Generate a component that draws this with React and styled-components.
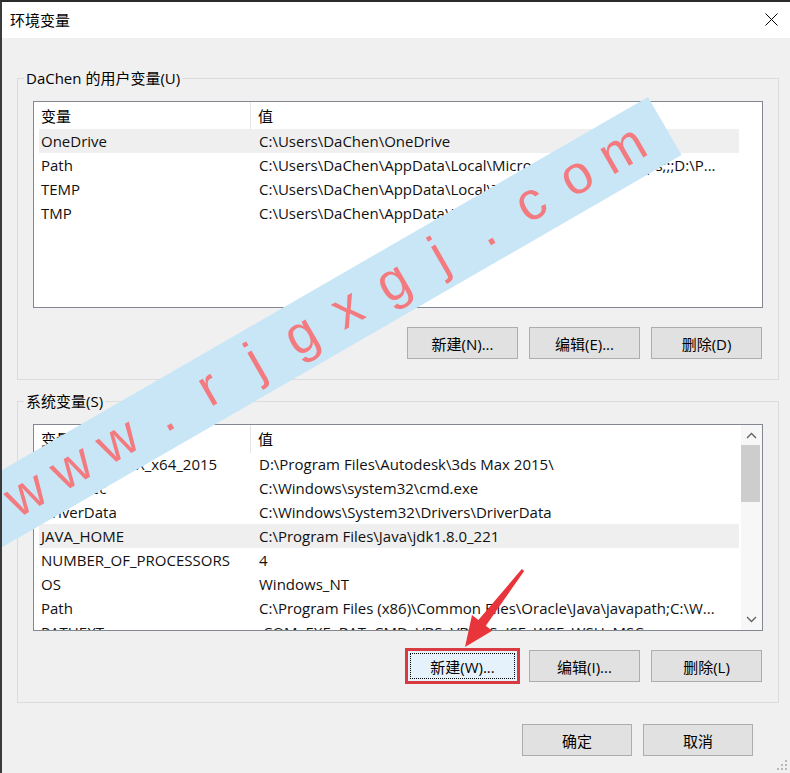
import React from "react";
import styled, { createGlobalStyle } from "styled-components";

const GlobalStyle = createGlobalStyle`
  html, body { margin: 0; padding: 0; background: #f0f0f0; }
  body {
    font-family: "Open Sans", "Noto Sans CJK SC", sans-serif;
    font-size: 15px;
    color: #000;
  }
  * { box-sizing: border-box; }
`;

const Window = styled.div`
  position: relative;
  width: 790px;
  height: 773px;
  background: #f0f0f0;
  border-top: 2px solid #2b2b2b;
  border-left: 2px solid #3a3a3a;
  display: flex;
  flex-direction: column;
  overflow: hidden;
`;

const TitleBar = styled.div`
  height: 36px;
  background: #fff;
  display: flex;
  align-items: center;
  justify-content: space-between;
  padding: 0 12px 2px 8px;
  font-size: 15px;
  flex-shrink: 0;
`;

const CloseIcon = styled.svg`
  width: 13px;
  height: 13px;
  display: block;
`;

const Body = styled.div`
  padding: 0 11px 0 15px;
  display: flex;
  flex-direction: column;
`;

const Group = styled.fieldset`
  margin: ${(p) => (p.$first ? "30px" : "11px")} 0 0 0;
  border: 1px solid #dcdcdc;
  padding: 0 15px 20px 15px;
  min-width: 0;
`;

const Legend = styled.legend`
  margin-left: -9px;
  padding: 0 2px;
  line-height: 20px;
  font-size: 15px;
`;

const List = styled.div`
  margin-top: 13px;
  height: 207px;
  border: 1px solid #828790;
  background: #fff;
  display: flex;
  overflow: hidden;
`;

const ListBody = styled.div`
  flex: 1;
  min-width: 0;
  display: flex;
  flex-direction: column;
`;

const Header = styled.div`
  display: grid;
  grid-template-columns: 217px 1fr;
  height: 27px;
  flex-shrink: 0;
`;

const HeaderCell = styled.div`
  line-height: 28px;
  padding-left: 7px;
  border-right: ${(p) => (p.$divider ? "1px solid #e5e5e5" : "none")};
  white-space: nowrap;
`;

const Row = styled.div`
  margin-left: 5px;
  width: 700px;
  height: 24px;
  flex-shrink: 0;
  display: grid;
  grid-template-columns: 218px 482px;
  background: ${(p) => (p.$selected ? "#efefef" : "transparent")};
`;

const Cell = styled.div`
  padding-left: 2px;
  line-height: 24px;
  white-space: nowrap;
  overflow: hidden;
  text-overflow: ellipsis;
  color: #111;
`;

const ScrollBar = styled.div`
  width: 21px;
  flex-shrink: 0;
  background: #f7f7f7;
  display: flex;
  flex-direction: column;
  align-items: stretch;
`;

const ScrollArrow = styled.div`
  height: ${(p) => p.$h}px;
  display: flex;
  align-items: center;
  justify-content: center;
  flex-shrink: 0;
`;

const Thumb = styled.div`
  height: 57px;
  margin: 0 2px 0 0;
  background: #cdcdcd;
  flex-shrink: 0;
`;

const Track = styled.div`
  flex: 1;
`;

const ButtonRow = styled.div`
  display: flex;
  justify-content: flex-end;
  gap: 11px;
  margin-top: 19px;
  padding-right: 1px;
`;

const Button = styled.button`
  width: ${(p) => p.$w || 111}px;
  height: 32px;
  padding: 2px;
  margin: 0;
  border: 1px solid ${(p) => (p.$focused ? "#0078d7" : "#adadad")};
  background: ${(p) => (p.$focused ? "#e5f1fb" : "#e1e1e1")};
  font-family: inherit;
  font-size: 15px;
  color: #000;
  display: flex;
  outline: ${(p) => (p.$marked ? "3px solid #d93a40" : "none")};
  outline-offset: -1px;
`;

const ButtonLabel = styled.span`
  flex: 1;
  display: flex;
  align-items: center;
  justify-content: center;
  border: 1px dotted ${(p) => (p.$focused ? "#000" : "transparent")};
`;

const Footer = styled.div`
  display: flex;
  justify-content: flex-end;
  gap: 11px;
  padding: 21px 26px 0 0;
`;

const Overlay = styled.svg`
  position: absolute;
  left: -2px;
  top: -2px;
  pointer-events: none;
`;

const Band = styled.div`
  position: absolute;
  left: -174px;
  top: 95px;
  width: 820px;
  height: 67px;
  background: #c9e6f6;
  transform-origin: 100% 0;
  transform: rotate(-30deg);
  display: flex;
  justify-content: flex-end;
  align-items: center;
  padding: 0 22px 6px 0;
  pointer-events: none;
`;

const Letter = styled.span`
  width: 53px;
  text-align: center;
  font-family: "Liberation Sans", Arial, sans-serif;
  font-size: 54px;
  line-height: 1;
  color: #f37b80;
`;

const Grip = styled.svg`
  position: absolute;
  right: 2px;
  bottom: 2px;
`;

const userVars = [
  ["OneDrive", "C:\\Users\\DaChen\\OneDrive", true],
  ["Path", "C:\\Users\\DaChen\\AppData\\Local\\Microsoft\\WindowsApps;;;D:\\P..."],
  ["TEMP", "C:\\Users\\DaChen\\AppData\\Local\\Temp"],
  ["TMP", "C:\\Users\\DaChen\\AppData\\Local\\Temp"],
];

const sysVars = [
  ["ADSK_3DSMAX_x64_2015", "D:\\Program Files\\Autodesk\\3ds Max 2015\\"],
  ["ComSpec", "C:\\Windows\\system32\\cmd.exe"],
  ["DriverData", "C:\\Windows\\System32\\Drivers\\DriverData"],
  ["JAVA_HOME", "C:\\Program Files\\Java\\jdk1.8.0_221", true],
  ["NUMBER_OF_PROCESSORS", "4"],
  ["OS", "Windows_NT"],
  ["Path", "C:\\Program Files (x86)\\Common Files\\Oracle\\Java\\javapath;C:\\W..."],
  ["PATHEXT", ".COM;.EXE;.BAT;.CMD;.VBS;.VBE;.JS;.JSE;.WSF;.WSH;.MSC"],
];

function VarList({ rows, scroll }) {
  return (
    <List>
      <ListBody>
        <Header>
          <HeaderCell $divider>变量</HeaderCell>
          <HeaderCell>值</HeaderCell>
        </Header>
        {rows.map(([k, v, sel], i) => (
          <Row key={i} $selected={sel}>
            <Cell>{k}</Cell>
            <Cell>{v}</Cell>
          </Row>
        ))}
      </ListBody>
      {scroll && (
        <ScrollBar>
          <ScrollArrow $h={20}>
            <svg width="11" height="7" viewBox="0 0 11 7">
              <path d="M1 6 L5.5 1.5 L10 6" fill="none" stroke="#606060" strokeWidth="1.3" />
            </svg>
          </ScrollArrow>
          <Thumb />
          <Track />
          <ScrollArrow $h={22}>
            <svg width="11" height="7" viewBox="0 0 11 7">
              <path d="M1 1 L5.5 5.5 L10 1" fill="none" stroke="#606060" strokeWidth="1.3" />
            </svg>
          </ScrollArrow>
        </ScrollBar>
      )}
    </List>
  );
}

function Btn({ children, focused, marked, w }) {
  return (
    <Button $focused={focused} $marked={marked} $w={w}>
      <ButtonLabel $focused={focused}>{children}</ButtonLabel>
    </Button>
  );
}

export default function App() {
  const letters = "www.rjgxgj.com".split("");
  return (
    <>
      <GlobalStyle />
      <Window>
        <TitleBar>
          <span>环境变量</span>
          <CloseIcon viewBox="0 0 13 13">
            <path d="M0.5 0.5 L12.5 12.5 M12.5 0.5 L0.5 12.5" stroke="#000" strokeWidth="1" />
          </CloseIcon>
        </TitleBar>
        <Body>
          <Group $first>
            <Legend>DaChen 的用户变量(U)</Legend>
            <VarList rows={userVars} />
            <ButtonRow>
              <Btn>新建(N)...</Btn>
              <Btn>编辑(E)...</Btn>
              <Btn>删除(D)</Btn>
            </ButtonRow>
          </Group>
          <Group>
            <Legend>系统变量(S)</Legend>
            <VarList rows={sysVars} scroll />
            <ButtonRow>
              <Btn focused marked>新建(W)...</Btn>
              <Btn>编辑(I)...</Btn>
              <Btn>删除(L)</Btn>
            </ButtonRow>
          </Group>
          <Footer>
            <Btn w={110}>确定</Btn>
            <Btn w={110}>取消</Btn>
          </Footer>
        </Body>
        <Band>
          {letters.map((c, i) => (
            <Letter key={i}>{c}</Letter>
          ))}
        </Band>
        <Overlay width="790" height="773" viewBox="0 0 790 773">
          <polygon
            points="524.2,570.9 485.8,625.8 492.2,630.8 465,647 472.0,615.0 478.4,620.0 521.8,569.1"
            fill="#e8353b"
          />
        </Overlay>
        <Grip width="11" height="11" viewBox="0 0 11 11">
          <g fill="#b8b8b8">
            <rect x="8" y="0" width="2" height="2" />
            <rect x="4" y="4" width="2" height="2" />
            <rect x="8" y="4" width="2" height="2" />
            <rect x="0" y="8" width="2" height="2" />
            <rect x="4" y="8" width="2" height="2" />
            <rect x="8" y="8" width="2" height="2" />
          </g>
        </Grip>
      </Window>
    </>
  );
}
